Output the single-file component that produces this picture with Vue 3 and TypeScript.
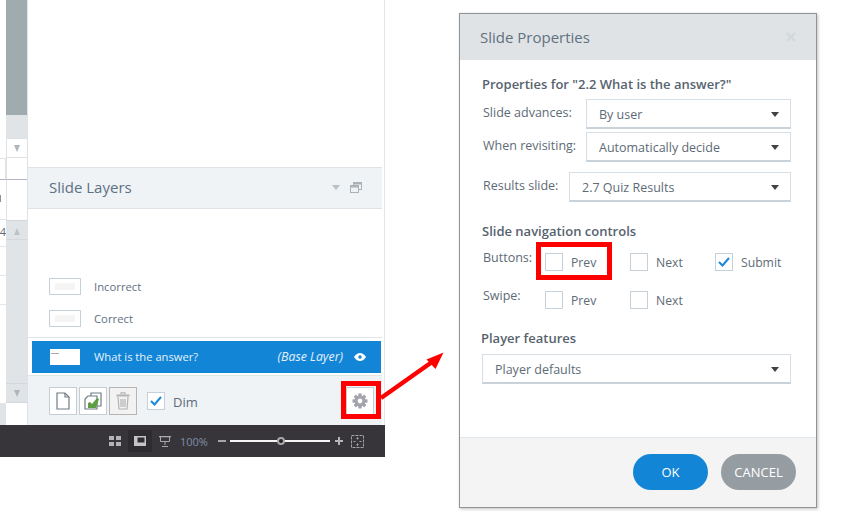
<script setup lang="ts">
const layers = ['Incorrect', 'Correct']
interface Opt { label: string; checked: boolean }
const buttons: Opt[] = [
  { label: 'Prev', checked: false },
  { label: 'Next', checked: false },
  { label: 'Submit', checked: true },
]
const swipe: Opt[] = [
  { label: 'Prev', checked: false },
  { label: 'Next', checked: false },
]
</script>

<template>
  <div class="page">
    <section class="app">
      <div class="workspace">
        <div class="strip">
          <div class="grid-col">
            <div class="gc-top"></div>
            <div class="gc-line"></div>
            <div class="gc-cell tick-row"><i class="tick"></i></div>
            <div class="gc-cell num">4</div>
            <div class="gc-cell"></div>
            <div class="gc-cell"></div>
            <div class="gc-cell last"></div>
            <div class="gc-foot"></div>
          </div>
          <div class="scroll-col">
            <div class="thumb"></div>
            <div class="track short"></div>
            <div class="arrow-btn white"><i class="tri down"></i></div>
            <div class="blank"></div>
            <div class="divider"></div>
            <div class="blank mid"></div>
            <div class="arrow-btn"><i class="tri up"></i></div>
            <div class="track long"></div>
            <div class="arrow-btn"><i class="tri down"></i></div>
            <div class="blank end"></div>
          </div>
        </div>
        <div class="panel">
          <div class="panel-top"></div>
          <header class="panel-head">
            <span class="panel-title">Slide Layers</span>
            <i class="head-tri"></i>
            <svg class="head-win" width="12" height="11" viewBox="0 0 12 11" fill="none" stroke="#aab2b8" stroke-width="1">
              <rect x="3.5" y="0.5" width="8" height="7" />
              <rect x="0.5" y="3.5" width="8" height="7" fill="#f0f3f6" />
              <path d="M1 4.5h7M4 1.5h7" stroke-width="2" />
            </svg>
          </header>
          <div class="layer-list">
            <div v-for="name in layers" :key="name" class="layer">
              <span class="layer-thumb"><i></i></span>
              <span class="layer-name">{{ name }}</span>
            </div>
          </div>
          <div class="base-wrap">
            <div class="base">
              <span class="base-thumb"><i></i></span>
              <span class="base-name">What is the answer?</span>
              <em class="base-tag">(Base Layer)</em>
              <svg width="12" height="8" viewBox="0 0 12 8">
                <path d="M0 4C2 1 4 0 6 0s4 1 6 4c-2 3-4 4-6 4S2 7 0 4z" fill="#fff" />
                <circle cx="6" cy="4" r="1.7" fill="#1285d6" />
              </svg>
            </div>
          </div>
          <footer class="panel-foot">
            <button class="tool">
              <svg width="14" height="18" viewBox="0 0 14 18" fill="#fff" stroke="#6f7d82" stroke-width="1.2">
                <path d="M1 1h8l4 4v12H1z" />
                <path d="M9 1v4h4" fill="none" />
              </svg>
            </button>
            <button class="tool">
              <svg width="18" height="18" viewBox="0 0 18 18">
                <path d="M7 1h10v13H7z" fill="#fff" stroke="#6f7d82" stroke-width="1.2" />
                <path d="M4 4h9v13H1V7z" fill="#fff" stroke="#6f7d82" stroke-width="1.2" />
                <path d="M4 16v-5l2-1 2 2 5-6 2 1-3 9z" fill="#5d9e44" />
              </svg>
            </button>
            <button class="tool off">
              <svg width="14" height="18" viewBox="0 0 14 18" fill="none" stroke="#b4b4b4" stroke-width="1.2">
                <path d="M0.5 3.5h13" stroke-width="2" />
                <path d="M5 2.500V0.800h4v1.700" />
                <path d="M2 5l1 12h8l1-12" />
                <path d="M5 7v8M7 7v8M9 7v8" />
              </svg>
            </button>
            <label class="dim">
              <span class="check"><svg width="12" height="10" viewBox="0 0 12 10" fill="none" stroke="#1a87d9" stroke-width="2"><path d="M1 5l3.500 3.500L11 1" /></svg></span>
              <span class="dim-text">Dim</span>
            </label>
            <button class="tool gear">
              <svg width="16" height="16" viewBox="0 0 16 16">
                <g fill="#a3a3ab">
                  <rect x="6.300" y="0.500" width="3.400" height="15" rx="0.600" />
                  <rect x="6.300" y="0.500" width="3.400" height="15" rx="0.600" transform="rotate(45 8 8)" />
                  <rect x="6.300" y="0.500" width="3.400" height="15" rx="0.600" transform="rotate(90 8 8)" />
                  <rect x="6.300" y="0.500" width="3.400" height="15" rx="0.600" transform="rotate(135 8 8)" />
                  <circle cx="8" cy="8" r="5.500" />
                </g>
                <circle cx="8" cy="8" r="2.400" fill="#fff" />
              </svg>
            </button>
          </footer>
        </div>
      </div>
      <nav class="statusbar">
        <svg width="12" height="10" viewBox="0 0 12 10" fill="#b4b4b8">
          <rect width="5" height="4" /><rect x="7" width="5" height="4" />
          <rect y="6" width="5" height="4" /><rect x="7" y="6" width="5" height="4" />
        </svg>
        <span class="active-view">
          <svg width="12" height="10" viewBox="0 0 12 10" fill="#c4c4c8">
            <path d="M0 0h12v10H0zM3.500 1.500V6.500h7V1.500z" fill-rule="evenodd" />
          </svg>
        </span>
        <svg class="present" width="12" height="11" viewBox="0 0 12 11" fill="none" stroke="#a9a9ad">
          <path d="M0 .5h12" stroke-width="1.600" />
          <path d="M1.500 1v4.500h9V1M6 5.500V9M3 10.500h6" />
        </svg>
        <span class="zoom-value">100%</span>
        <i class="minus"></i>
        <span class="slider"><i class="knob"></i></span>
        <i class="plus"></i>
        <svg class="fit" width="13" height="13" viewBox="0 0 13 13" fill="none" stroke="#a5a5a9">
          <rect x="0.500" y="0.500" width="12" height="12" stroke-dasharray="3 1" />
          <path d="M6.500 2.500v2M5.500 3.500l1-1 1 1M6.500 8.500v2M5.500 9.500l1 1 1-1M2.500 6.500h2M8.500 6.500h2" />
        </svg>
      </nav>
    </section>

    <section class="dialog">
      <header class="dlg-head">
        <h1>Slide Properties</h1>
        <svg width="10" height="10" viewBox="0 0 10 10" stroke="#d3d8db" stroke-width="2.400"><path d="M1 1l8 8M9 1l-8 8" /></svg>
      </header>
      <div class="dlg-body">
        <h2 class="first">Properties for "2.2 What is the answer?"</h2>
        <div class="field f1">
          <span class="field-label">Slide advances:</span>
          <div class="select s-narrow">By user<i></i></div>
        </div>
        <div class="field f2">
          <span class="field-label">When revisiting:</span>
          <div class="select s-narrow">Automatically decide<i></i></div>
        </div>
        <div class="field f3">
          <span class="field-label">Results slide:</span>
          <div class="select s-wide">2.7 Quiz Results<i></i></div>
        </div>
        <h2 class="second">Slide navigation controls</h2>
        <div class="opts o1">
          <span class="opt-label">Buttons:</span>
          <label v-for="b in buttons" :key="b.label" class="opt">
            <span class="box">
              <svg v-if="b.checked" width="12" height="10" viewBox="0 0 12 10" fill="none" stroke="#1a87d9" stroke-width="2"><path d="M1 5l3.500 3.500L11 1" /></svg>
            </span>
            <span class="opt-text">{{ b.label }}</span>
          </label>
        </div>
        <div class="opts o2">
          <span class="opt-label">Swipe:</span>
          <label v-for="s in swipe" :key="s.label" class="opt">
            <span class="box"></span>
            <span class="opt-text">{{ s.label }}</span>
          </label>
        </div>
        <h2 class="third">Player features</h2>
        <div class="select s-full">Player defaults<i></i></div>
      </div>
      <footer class="dlg-foot">
        <button class="pill ok">OK</button>
        <button class="pill cancel">CANCEL</button>
      </footer>
    </section>

    <div class="mark mark-prev"></div>
    <div class="mark mark-gear"></div>
    <svg class="callout" width="70" height="54" viewBox="0 0 70 54">
      <path d="M3 47L54 11" stroke="#f00" stroke-width="4.500" />
      <path d="M65.500 1.500L57.500 18 48.500 8.500z" fill="#f00" />
    </svg>
  </div>
</template>

<style>
html, body { margin: 0; background: #fff; }
</style>

<style scoped>
.page {
  position: relative;
  display: flex;
  align-items: flex-start;
  width: 841px;
  height: 516px;
  overflow: hidden;
  background: #fff;
  font-family: "Open Sans", "Noto Sans", sans-serif;
  color: #5d6b76;
}
.app { width: 385px; height: 457px; display: flex; flex-direction: column; flex: none; }
.workspace { flex: 1; display: flex; min-height: 0; }
.strip { width: 28px; flex: none; display: flex; border-right: 1px solid #dde2e7; box-sizing: border-box; }
.grid-col { width: 6px; flex: none; display: flex; flex-direction: column; }
.gc-top { height: 158px; }
.gc-line { height: 22px; border-top: 1px solid #dfe3e6; border-bottom: 1px solid #b3b4c4; box-sizing: border-box; border-right: 1px solid #dfe3e6; }
.gc-cell { height: 29px; border-bottom: 1px solid #e3e6e9; box-sizing: border-box; position: relative; }
.tick-row { height: 40px; }
.tick { position: absolute; left: 0; top: 15px; width: 1px; height: 7px; background: #8a949c; }
.gc-cell.num { height: 27px; font-size: 11px; line-height: 23px; color: #5d6b76; overflow: hidden; direction: rtl; white-space: nowrap; }
.gc-cell.last { height: 98px; border-bottom: 0; }
.gc-foot { flex: 1; background: #e0e4e7; }
.scroll-col { flex: 1; display: flex; flex-direction: column; }
.thumb { height: 115px; background: #a0abb0; }
.track { background: #e0e4e7; }
.track.short { height: 23px; }
.track.long { flex: 1; }
.arrow-btn { height: 20px; background: #e0e4e7; display: flex; align-items: center; justify-content: center; border-bottom: 1px solid #d3d8dc; border-top: 1px solid #d3d8dc; box-sizing: border-box; }
.arrow-btn.white { background: #fff; border: 1px solid #dfe3e6; border-right: 0; }
.blank { height: 21px; border-left: 1px solid #dfe3e6; box-sizing: border-box; }
.blank.mid { height: 40px; }
.blank.end { height: 22px; border: 0; }
.divider { height: 1px; background: #b3b4c4; }
.tri { width: 0; height: 0; border-left: 3.500px solid transparent; border-right: 3.500px solid transparent; }
.tri.down { border-top: 7px solid #adb6ba; }
.tri.up { border-bottom: 7px solid #bcc4c8; margin-top: 3px; }

.panel { flex: 1; display: flex; flex-direction: column; border-right: 1px solid #e2e6ea; padding-right: 2px; min-width: 0; }
.panel-top { height: 167px; }
.panel-head { height: 42px; box-sizing: border-box; display: flex; align-items: center; padding: 0 20px 2px 21px; background: #f0f3f6; border-top: 1px solid #dfe3e7; border-bottom: 1px solid #dfe3e7; }
.panel-title { flex: 1; font-size: 15px; color: #5b7184; }
.head-tri { width: 0; height: 0; border-left: 4px solid transparent; border-right: 4px solid transparent; border-top: 5px solid #b9c0c6; margin-right: 10px; }
.layer-list { height: 128px; display: flex; flex-direction: column; justify-content: flex-end; box-sizing: border-box; padding-bottom: 10px; gap: 15px; }
.layer { display: flex; align-items: center; height: 17px; padding-left: 21px; font-size: 11.300px; color: #62717f; }
.layer-thumb { width: 32px; height: 17px; box-sizing: border-box; border: 1px solid #c6d0d8; display: flex; align-items: center; justify-content: center; }
.layer-thumb i { width: 20px; height: 7px; background: #f5f5f5; }
.layer-name { margin-left: 13px; }
.base-wrap { height: 39px; box-sizing: border-box; padding: 3px 1px 3px 4px; border-top: 1px solid #e2e6ea; border-bottom: 1px solid #e2e6ea; background: #fff; }
.base { height: 32px; display: flex; align-items: center; background: #1285d6; color: #e4f1fb; font-size: 11.200px; padding: 0 15px 0 18px; }
.base-thumb { width: 30px; height: 16px; background: #fff; position: relative; flex: none; }
.base-thumb i { position: absolute; left: 1px; top: 4px; width: 8px; height: 1px; background: #aaa; }
.base-name { margin-left: 14px; flex: 1; padding-bottom: 2px; }
.base-tag { margin-right: 11px; font-size: 12.300px; padding-bottom: 2px; }
.panel-foot { flex: 1; background: #f0f3f6; display: flex; align-items: center; gap: 2px; padding: 0 8px 0 21px; box-sizing: border-box; }
.tool { width: 28px; height: 28px; box-sizing: border-box; padding: 0; background: #fff; border: 1px solid #c5ced3; display: flex; align-items: center; justify-content: center; }
.tool.off { background: #f2f2f2; border-color: #b5b5b5; }
.dim { display: flex; align-items: center; margin-left: 8px; flex: 1; }
.check { width: 18px; height: 18px; box-sizing: border-box; background: #fff; border: 1px solid #c5d0d8; display: flex; align-items: center; justify-content: center; }
.dim-text { margin-left: 8px; padding-top: 2px; font-size: 13px; color: #5b6b7c; }

.statusbar { height: 32px; flex: none; background: #38353a; display: flex; align-items: center; padding-left: 109px; }
.active-view { width: 24px; height: 22px; margin-left: 7px; background: #2e2c31; display: flex; align-items: center; justify-content: center; }
.present { margin-left: 7px; }
.zoom-value { margin-left: 9px; font-size: 11px; color: #7d8fa8; width: 29px; }
.minus { width: 8px; height: 2px; background: #a5a5a9; margin-left: 9px; }
.slider { width: 100px; height: 2px; background: #f4f4f4; margin-left: 4px; position: relative; }
.knob { position: absolute; left: 47px; top: -3px; width: 4px; height: 4px; box-sizing: content-box; border: 2px solid #a9a9ad; border-radius: 50%; background: #222; }
.plus { width: 8px; height: 8px; margin-left: 5px; background: linear-gradient(#b5b5b9, #b5b5b9) center/8px 2px no-repeat, linear-gradient(#b5b5b9, #b5b5b9) center/2px 8px no-repeat; }
.fit { margin-left: 8px; }

.dialog { width: 358px; height: 495px; margin: 13px 0 0 74px; flex: none; box-sizing: border-box; border: 1px solid #8f9496; box-shadow: 1px 1px 3px rgba(0,0,0,.25); display: flex; flex-direction: column; background: #fff; }
.dlg-head { height: 46px; flex: none; background: #dfe3e6; display: flex; align-items: center; justify-content: space-between; padding: 0 20px; }
h1 { margin: 0; font-size: 15px; font-weight: 400; color: #5f7180; }
.dlg-body { flex: 1; padding: 0 25px 0 22px; }
h2 { margin: 0; font-size: 13px; font-weight: 600; color: #56636e; line-height: 18px; }
h2.first { padding-top: 16px; margin-top: -1px; }
h2.second { margin-top: 20px; }
h2.third { margin-top: 20px; margin-left: -1px; }
.field { display: flex; align-items: flex-start; justify-content: space-between; }
.field-label { font-size: 12.500px; line-height: 18px; color: #5d6b76; padding: 5px 0 0 1px; }
.f1 { margin-top: 6px; }
.f2 { margin-top: 3px; }
.f3 { margin-top: 10px; }
.select { height: 30px; box-sizing: border-box; background: #fff; border: 1px solid #d6dfe5; border-bottom: 2px solid #c9d2d8; display: flex; align-items: center; justify-content: space-between; padding: 1px 11px 0 12px; font-size: 12.500px; color: #5d6b76; }
.select i { width: 0; height: 0; border-left: 4px solid transparent; border-right: 4px solid transparent; border-top: 5px solid #3f4346; }
.s-narrow { width: 205px; }
.s-wide { width: 222px; }
.s-full { width: 309px; margin-top: 7px; }
.opts { display: grid; grid-template-columns: 62px 85px 85px auto; align-items: start; margin-left: 1px; }
.o1 { margin-top: 12px; }
.o2 { margin-top: 19px; }
.opt-label { font-size: 12.500px; line-height: 18px; margin-top: -3px; color: #5d6b76; }
.opt { display: flex; align-items: center; }
.box { width: 18px; height: 18px; box-sizing: border-box; border: 1px solid #c5d0d8; display: flex; align-items: center; justify-content: center; flex: none; }
.opt-text { margin-left: 8px; padding-top: 2px; font-size: 12.200px; color: #5d6b76; }
.dlg-foot { height: 70px; flex: none; box-sizing: border-box; background: #f4f4f4; border-top: 1px solid #dfe6ee; display: flex; justify-content: flex-end; align-items: flex-start; gap: 13px; padding: 16px 20px 0 0; }
.pill { width: 75px; height: 36px; border: 0; border-radius: 18px; color: #fff; font: 400 13px "Open Sans", sans-serif; padding: 0; }
.ok { background: #1285d6; }
.cancel { background: #959da3; }

.mark { position: absolute; box-sizing: border-box; border: 5px solid #f00; }
.mark-prev { left: 536px; top: 242px; width: 76px; height: 38px; }
.mark-gear { left: 341px; top: 381px; width: 40px; height: 38px; }
.callout { position: absolute; left: 378px; top: 351px; }
</style>
